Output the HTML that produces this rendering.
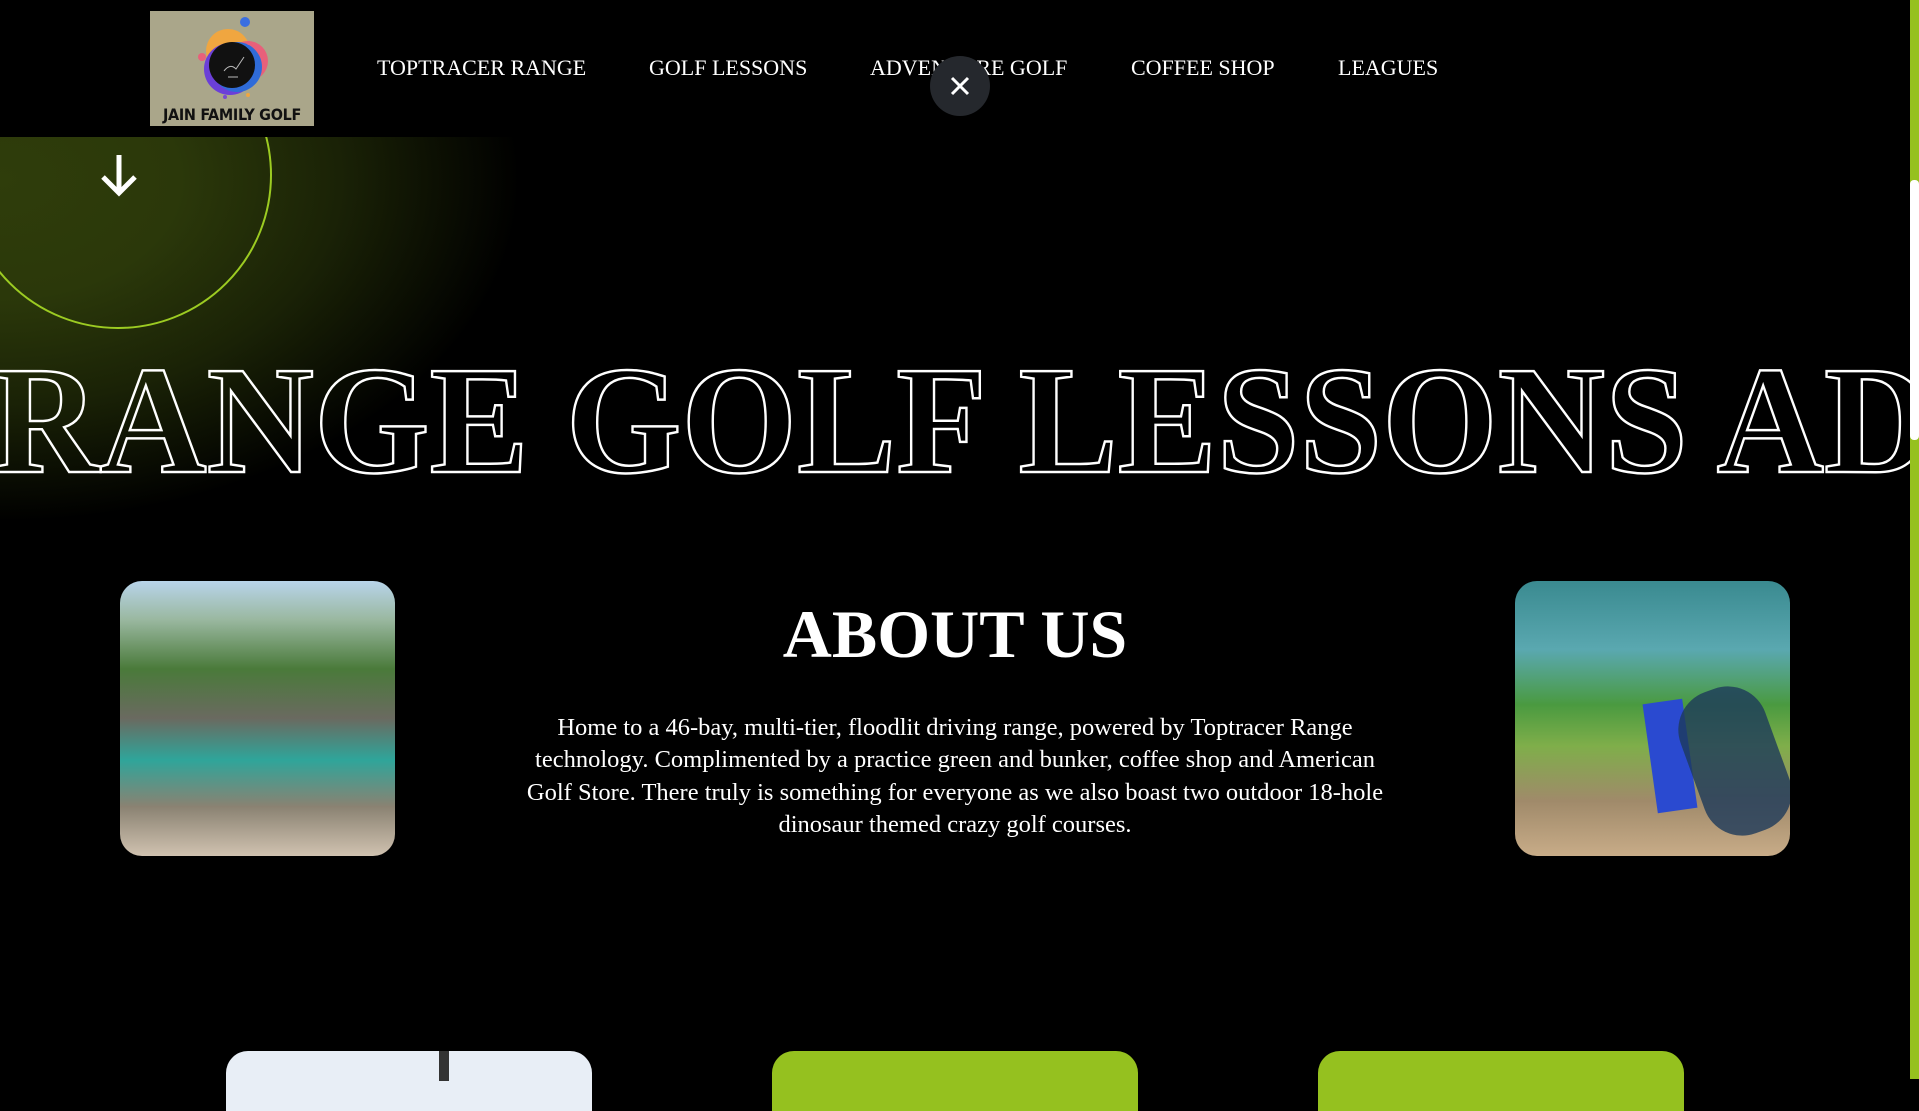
<!DOCTYPE html>
<html><head><meta charset="utf-8"><style>
*{margin:0;padding:0;box-sizing:border-box}
body{width:1919px;height:1079px;background:#000;overflow:hidden;position:relative;font-family:"Liberation Serif",serif;color:#fff}
.glow{position:absolute;left:-300px;top:-160px;width:1000px;height:800px;background:radial-gradient(ellipse at 300px 340px,#2f3d0b 0,#2b380a 180px,#1a2206 340px,#000 520px)}
nav{position:absolute;left:0;top:0;width:1910px;height:137px;background:#000}
.logo{position:absolute;left:150px;top:11px;width:164px;height:115px;background:#aaa68a;overflow:hidden}
.logo .t{position:absolute;left:0;bottom:2px;width:164px;text-align:center;font:bold 16px "DejaVu Sans Condensed","DejaVu Sans",sans-serif;color:#111;white-space:nowrap;letter-spacing:-0.3px}
.nav a{position:absolute;top:55px;font-size:22px;color:#fff;text-decoration:none;white-space:nowrap}
.close{position:absolute;left:930px;top:56px;width:60px;height:60px;border-radius:50%;background:#25282d}
.circ{position:absolute;left:-36px;top:21px;width:308px;height:308px;border-radius:50%;border:2px solid #9ccb22}
.marq{position:absolute;left:-8px;top:336px;font-size:154px;font-weight:bold;white-space:nowrap;color:transparent;-webkit-text-stroke:2.5px #fff;transform:scaleX(.965);transform-origin:0 0;line-height:170px}
.img{position:absolute;top:581px;width:275px;height:275px;border-radius:22px;overflow:hidden}
h2{position:absolute;left:0;width:1910px;text-align:center;top:596px;font-size:68px;font-weight:bold;line-height:76px}
p{position:absolute;left:515px;width:880px;top:712px;text-align:center;font-size:24.5px;line-height:32.4px}
.card{position:absolute;top:1051px;width:366px;height:60px;border-radius:22px 22px 0 0;background:#95c11f}
.sb{position:absolute;left:1910px;top:0;width:9px;height:1079px;background:#96c11f}
.sb i{position:absolute;left:0;top:180px;width:9px;height:260px;background:#fff;border-radius:4px}
</style></head><body>
<div class="glow"></div>
<div class="circ"></div>
<svg style="position:absolute;left:98px;top:153px" width="42" height="44" viewBox="0 0 42 44"><path d="M21 2V40M5 24L21 40L37 24" fill="none" stroke="#fff" stroke-width="5"/></svg>
<nav>
<div class="logo">
<svg width="164" height="95" viewBox="0 0 164 95" style="position:absolute;left:0;top:0">
<circle cx="78" cy="40" r="22" fill="#f0a640"/>
<circle cx="98" cy="50" r="20" fill="#e8607a"/>
<circle cx="80" cy="58" r="26" fill="#6b3fd8"/>
<circle cx="87" cy="56" r="25" fill="#2f6bd8"/>
<circle cx="82" cy="54" r="23" fill="#111"/>
<circle cx="95" cy="11" r="5" fill="#3b6ee0"/>
<circle cx="52" cy="46" r="4" fill="#e8607a"/>
<circle cx="99" cy="32" r="2" fill="#e8607a"/>
<circle cx="75" cy="86" r="2" fill="#7a4ad0"/>
<circle cx="98" cy="84" r="2" fill="#f0a640"/>
<path d="M74 60q6-8 12-2l8-12M78 66h10" stroke="#bbb" stroke-width="1" fill="none"/>
</svg>
<div class="t">JAIN FAMILY GOLF</div>
</div>
<div class="nav">
<a style="left:377px">TOPTRACER RANGE</a>
<a style="left:649px">GOLF LESSONS</a>
<a style="left:870px">ADVENTURE GOLF</a>
<a style="left:1131px">COFFEE SHOP</a>
<a style="left:1338px">LEAGUES</a>
</div>
<div class="close"><svg width="60" height="60" viewBox="0 0 60 60"><path d="M22 22L38 38M38 22L22 38" stroke="#fff" stroke-width="3"/></svg></div>
</nav>
<div class="marq">RANGE GOLF LESSONS ADVENTURE GOLF</div>
<div class="img" style="left:120px;background:linear-gradient(180deg,#b8d4ea 0,#9ab8a0 14%,#4a7a3a 32%,#6a6a60 50%,#2fa59a 65%,#8a8272 82%,#d0c2b0 100%)"></div>
<div class="img" style="left:1515px;background:linear-gradient(180deg,#3a8a90 0,#5aa8b0 25%,#4a9a40 45%,#7fae4a 60%,#a08a6a 80%,#c8ac88 100%)">
<div style="position:absolute;left:135px;top:120px;width:40px;height:110px;background:#2a4ad0;transform:rotate(-8deg)"></div>
<div style="position:absolute;left:175px;top:105px;width:90px;height:150px;background:#1d3a5a;border-radius:40px;transform:rotate(-20deg);opacity:.8"></div>
</div>
<h2>ABOUT US</h2>
<p>Home to a 46-bay, multi-tier, floodlit driving range, powered by Toptracer Range technology. Complimented by a practice green and bunker, coffee shop and American Golf Store. There truly is something for everyone as we also boast two outdoor 18-hole dinosaur themed crazy golf courses.</p>
<div class="card" style="left:226px;background:#e8eef6"><div style="position:absolute;left:213px;top:0;width:10px;height:30px;background:#333"></div></div>
<div class="card" style="left:772px"></div>
<div class="card" style="left:1318px"></div>
<div class="sb"><i></i></div>
</body></html>
